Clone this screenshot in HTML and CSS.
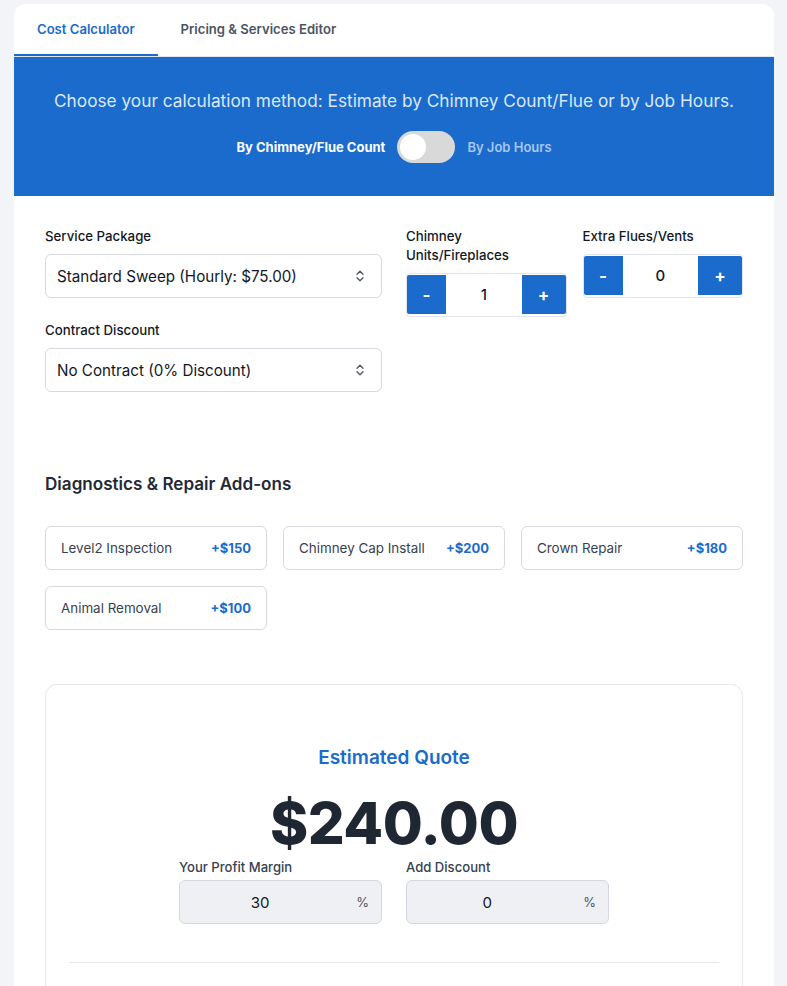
FILE: index.html
```html
<!DOCTYPE html>
<html lang="en">
<head>
<meta charset="utf-8">
<title>Chimney Cost Calculator</title>
<link rel="stylesheet" href="styles.css">
</head>
<body>
<div class="card">
  <nav class="tabs">
    <div class="tab active">Cost Calculator</div>
    <div class="tab">Pricing &amp; Services Editor</div>
  </nav>
  <section class="hero">
    <p class="hero-text">Choose your calculation method: Estimate by Chimney Count/Flue or by Job Hours.</p>
    <div class="mode-row">
      <span class="mode on">By Chimney/Flue Count</span>
      <span class="switch"><span class="knob"></span></span>
      <span class="mode off">By Job Hours</span>
    </div>
  </section>
  <section class="content">
    <div class="form-grid">
      <div class="left-col">
        <div class="field">
          <label class="label">Service Package</label>
          <div class="select">
            <span>Standard Sweep (Hourly: $75.00)</span>
            <svg class="chev" width="10" height="14" viewBox="0 0 10 14"><path d="M2 5.2 5 2.2 8 5.2M2 8.8 5 11.8 8 8.8" fill="none" stroke="#4b5563" stroke-width="1.3" stroke-linecap="round" stroke-linejoin="round"/></svg>
          </div>
        </div>
        <div class="field">
          <label class="label">Contract Discount</label>
          <div class="select">
            <span>No Contract (0% Discount)</span>
            <svg class="chev" width="10" height="14" viewBox="0 0 10 14"><path d="M2 5.2 5 2.2 8 5.2M2 8.8 5 11.8 8 8.8" fill="none" stroke="#4b5563" stroke-width="1.3" stroke-linecap="round" stroke-linejoin="round"/></svg>
          </div>
        </div>
      </div>
      <div class="right-col">
        <div class="field">
          <label class="label">Chimney Units/Fireplaces</label>
          <div class="stepper">
            <button class="step minus">-</button>
            <span class="val">1</span>
            <button class="step plus">+</button>
          </div>
        </div>
        <div class="field">
          <label class="label">Extra Flues/Vents</label>
          <div class="stepper">
            <button class="step minus">-</button>
            <span class="val">0</span>
            <button class="step plus">+</button>
          </div>
        </div>
      </div>
    </div>

    <h2 class="section-title">Diagnostics &amp; Repair Add-ons</h2>
    <div class="addons">
      <div class="addon"><span class="name">Level2 Inspection</span><span class="price">+$150</span></div>
      <div class="addon"><span class="name">Chimney Cap Install</span><span class="price">+$200</span></div>
      <div class="addon"><span class="name">Crown Repair</span><span class="price">+$180</span></div>
      <div class="addon"><span class="name">Animal Removal</span><span class="price">+$100</span></div>
    </div>

    <div class="quote">
      <h3 class="quote-title">Estimated Quote</h3>
      <div class="quote-amount">$240.00</div>
      <div class="quote-inputs">
        <div class="qfield">
          <label class="qlabel">Your Profit Margin</label>
          <div class="qinput"><span class="qval">30</span><span class="pct">%</span></div>
        </div>
        <div class="qfield">
          <label class="qlabel">Add Discount</label>
          <div class="qinput"><span class="qval">0</span><span class="pct">%</span></div>
        </div>
      </div>
      <hr class="divider">
    </div>
  </section>
</div>
</body>
</html>
```

FILE: styles.css
```css
* { box-sizing: border-box; }
html, body { margin: 0; }
body {
  background: #f3f4f7;
  font-family: Inter, "Noto Sans", "Liberation Sans", sans-serif;
  color: #1f2937;
  padding: 4px 13px 0 14px;
  height: 986px;
  overflow: hidden;
}
.card {
  background: #fff;
  border-radius: 12px 12px 0 0;
  overflow: hidden;
  min-height: 1100px;
}
.tabs {
  display: flex;
  height: 53px;
  border-bottom: 1px solid #dfe6f0;
}
.tab {
  padding: 0 23px;
  display: flex;
  align-items: center;
  font-size: 13.1px;
  font-weight: 600;
  color: #4b5563;
  border-bottom: 2px solid transparent;
}
.tab.active {
  color: #1a6bcc;
  border-bottom-color: #1a6bcc;
}
.hero {
  background: #1a6bcc;
  padding: 32px 24px 33px;
  display: flex;
  flex-direction: column;
  align-items: center;
  gap: 18px;
}
.hero-text {
  margin: 0;
  font-size: 17.25px;
  line-height: 24px;
  color: #dbe7f8;
  white-space: nowrap;
}
.mode-row {
  display: flex;
  align-items: center;
  gap: 12px;
}
.mode { font-size: 13px; font-weight: 700; }
.mode.on { color: #fff; }
.mode.off { color: #a9c6ef; font-weight: 600; }
.switch {
  width: 58px;
  height: 32px;
  border-radius: 16px;
  background: #d9d9d9;
  padding: 3px;
  display: flex;
}
.knob {
  width: 26px;
  height: 26px;
  border-radius: 50%;
  background: #fff;
}
.content {
  padding: 31px 31px 0;
}
.form-grid {
  display: grid;
  grid-template-columns: 337px 337px;
  column-gap: 24px;
}
.left-col {
  display: flex;
  flex-direction: column;
  gap: 23px;
}
.right-col {
  display: grid;
  grid-template-columns: 1fr 1fr;
  column-gap: 16px;
  align-items: start;
}
.label {
  display: block;
  font-size: 13.25px;
  font-weight: 500;
  line-height: 19px;
  color: #111827;
  margin-bottom: 8px;
}
.select {
  height: 44px;
  border: 1px solid #d6d9df;
  border-radius: 6px;
  display: flex;
  align-items: center;
  justify-content: space-between;
  padding: 0 16px 0 11px;
  font-size: 15.2px;
  color: #111827;
}
.chev { display: block; }
.stepper {
  height: 44px;
  border: 1px solid #e3e5ea;
  border-radius: 4px;
  display: flex;
  align-items: center;
  padding: 1px 0 2px 0;
}
.step {
  height: 39px;
  border: 0;
  background: #1a6bcc;
  color: #fff;
  font-family: inherit;
  font-size: 17px;
  font-weight: 700;
  padding: 0;
  display: flex;
  align-items: center;
  justify-content: center;
}
.step.minus { width: 39px; border-radius: 2px 0 0 2px; }
.step.plus { width: 44px; border-radius: 0 2px 2px 0; }
.val {
  flex: 1;
  text-align: center;
  font-size: 15px;
  font-weight: 500;
  color: #111827;
}
.section-title {
  margin: 80px 0 30px;
  font-size: 17.1px;
  line-height: 24px;
  font-weight: 600;
  color: #1f2937;
}
.addons {
  display: grid;
  grid-template-columns: repeat(3, 1fr);
  gap: 16px;
}
.addon {
  height: 44px;
  border: 1px solid #d6d9df;
  border-radius: 6px;
  display: flex;
  align-items: center;
  justify-content: space-between;
  padding: 0 15px;
  font-size: 13.4px;
}
.addon .name { color: #374151; }
.addon .price { color: #1a6bcc; font-weight: 700; font-size: 13px; }
.quote {
  margin-top: 54px;
  border: 1px solid #e5e7eb;
  border-radius: 12px;
  padding: 59px 23px 40px;
  display: flex;
  flex-direction: column;
  align-items: center;
}
.quote-title {
  margin: 0;
  font-size: 19px;
  line-height: 28px;
  font-weight: 600;
  color: #1a6bcc;
}
.quote-amount {
  margin-top: 21px;
  font-size: 58px;
  line-height: 60px;
  font-weight: 800;
  color: #1f2733;
  letter-spacing: -0.5px;
}
.quote-inputs {
  margin-top: 4px;
  display: flex;
  gap: 24px;
}
.qfield { width: 203px; }
.qlabel {
  display: block;
  font-size: 13.1px;
  font-weight: 500;
  line-height: 20px;
  color: #374151;
  margin-bottom: 3px;
}
.qinput {
  height: 44px;
  background: #eff0f4;
  border: 1px solid #d4d7dd;
  border-radius: 6px;
  display: flex;
  align-items: center;
  padding: 0 12px;
}
.qval {
  flex: 1;
  text-align: center;
  font-size: 15px;
  color: #111827;
}
.pct {
  margin-left: 28px;
  font-size: 13px;
  color: #4b5563;
}
.divider {
  align-self: stretch;
  margin: 38px 0 0;
  border: 0;
  border-top: 1px solid #e5e7eb;
}
```
